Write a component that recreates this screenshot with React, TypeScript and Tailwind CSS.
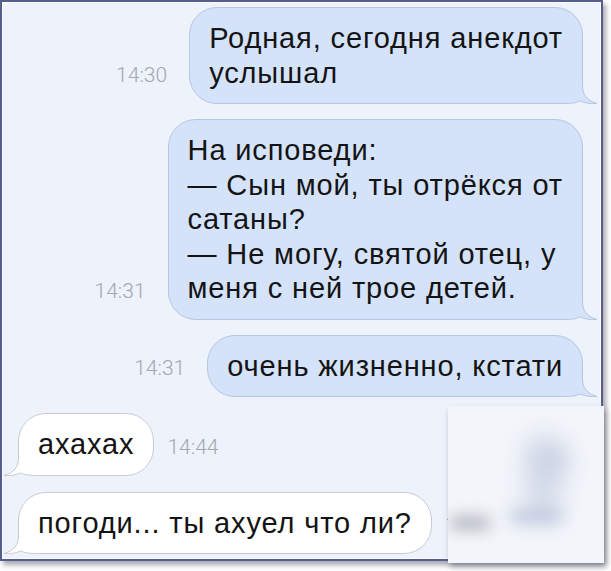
import type { ReactNode } from 'react';

function Tail({ side, fill, stroke }: { side: 'left' | 'right'; fill: string; stroke: string }) {
  return (
    <svg
      width="50"
      height="36"
      viewBox="0 0 50 36"
      className={side === 'right' ? 'absolute bottom-[-1px] right-[-17px]' : 'absolute bottom-[-1px] left-[-17px] -scale-x-100'}
    >
      <path d="M0 0 H33.5 V18 C33.5 27 38 32.5 48 35.5 C41 36 36 35 31 33 C27 35 22 35.5 14 35.5 H0 Z" fill={fill} />
      <path
        d="M33.5 0 V18 C33.5 27 38 32.5 48 35.5 C41 36 36 35 31 33 C27 35 22 35.5 14 35.5 H0"
        fill="none"
        stroke={stroke}
        strokeWidth="1"
      />
    </svg>
  );
}

function Bubble({ out, children }: { out?: boolean; children: ReactNode }) {
  return (
    <div
      className={
        out
          ? 'relative rounded-[28px] border border-[#b6c6e0] bg-[#d4e3fa] px-[19px] py-[13px]'
          : 'relative rounded-[28px] border border-[#c8cbd3] bg-white px-[19px] py-[13px]'
      }
    >
      <Tail side={out ? 'right' : 'left'} fill={out ? '#d4e3fa' : '#ffffff'} stroke={out ? '#b6c6e0' : '#c8cbd3'} />
      <p className="relative whitespace-nowrap font-['Liberation_Sans',Arial,sans-serif] text-[29px] leading-[34.5px] tracking-[0.03em] text-[#141414]">
        {children}
      </p>
    </div>
  );
}

function Time({ children }: { children: ReactNode }) {
  return (
    <span className="mb-[11px] font-['Roboto',sans-serif] text-[21px] font-light leading-[35px] text-[#a3a7b0]">{children}</span>
  );
}

export default function App() {
  return (
    <div className="relative h-[571px] w-[611px] overflow-hidden bg-white">
      <div className="h-[561px] w-[603px] border-2 border-[#575e8d] bg-[#edf2fb] shadow-[3px_4px_5px_rgba(60,60,80,0.45)]">
        <div className="flex h-full flex-col gap-[15px] border border-[#f8faff] pl-[15px] pr-[17px] pt-[4px]">
          <div className="flex items-end justify-end gap-[22px]">
            <Time>14:30</Time>
            <Bubble out>
              Родная, сегодня анекдот
              <br />
              услышал
            </Bubble>
          </div>
          <div className="flex items-end justify-end gap-[22px]">
            <Time>14:31</Time>
            <Bubble out>
              На исповеди:
              <br />— Сын мой, ты отрёкся от
              <br />
              сатаны?
              <br />— Не могу, святой отец, у
              <br />
              меня с ней трое детей.
            </Bubble>
          </div>
          <div className="flex items-end justify-end gap-[22px]">
            <Time>14:31</Time>
            <Bubble out>очень жизненно, кстати</Bubble>
          </div>
          <div className="mt-[1px] flex items-end gap-[13px]">
            <Bubble>ахахах</Bubble>
            <Time>14:44</Time>
          </div>
          <div className="mt-[1px] flex items-end gap-[13px]">
            <Bubble>погоди... ты ахуел что ли?</Bubble>
            <Time>14:44</Time>
          </div>
        </div>
      </div>

      {/* blurred watermark patch */}
      <div className="absolute left-[448px] top-[406px] h-[157px] w-[156px] overflow-hidden bg-[#f2f5fa] shadow-[2px_4px_6px_rgba(70,70,90,0.45)]">
        <div className="absolute left-[78px] top-[30px] h-[82px] w-[34px] rounded-full bg-[#d3d9e8] blur-md" />
        <div className="absolute left-[62px] top-[104px] h-[12px] w-[52px] rounded-full bg-[#b9c2dc] blur-sm" />
        <div className="absolute left-[2px] top-[112px] h-[10px] w-[40px] rounded-full bg-[#9ba0a8] blur-sm" />
        <div className="absolute left-[92px] top-[42px] h-[26px] w-[26px] rounded-full bg-[#c3cbe0] blur-md" />
      </div>
    </div>
  );
}
